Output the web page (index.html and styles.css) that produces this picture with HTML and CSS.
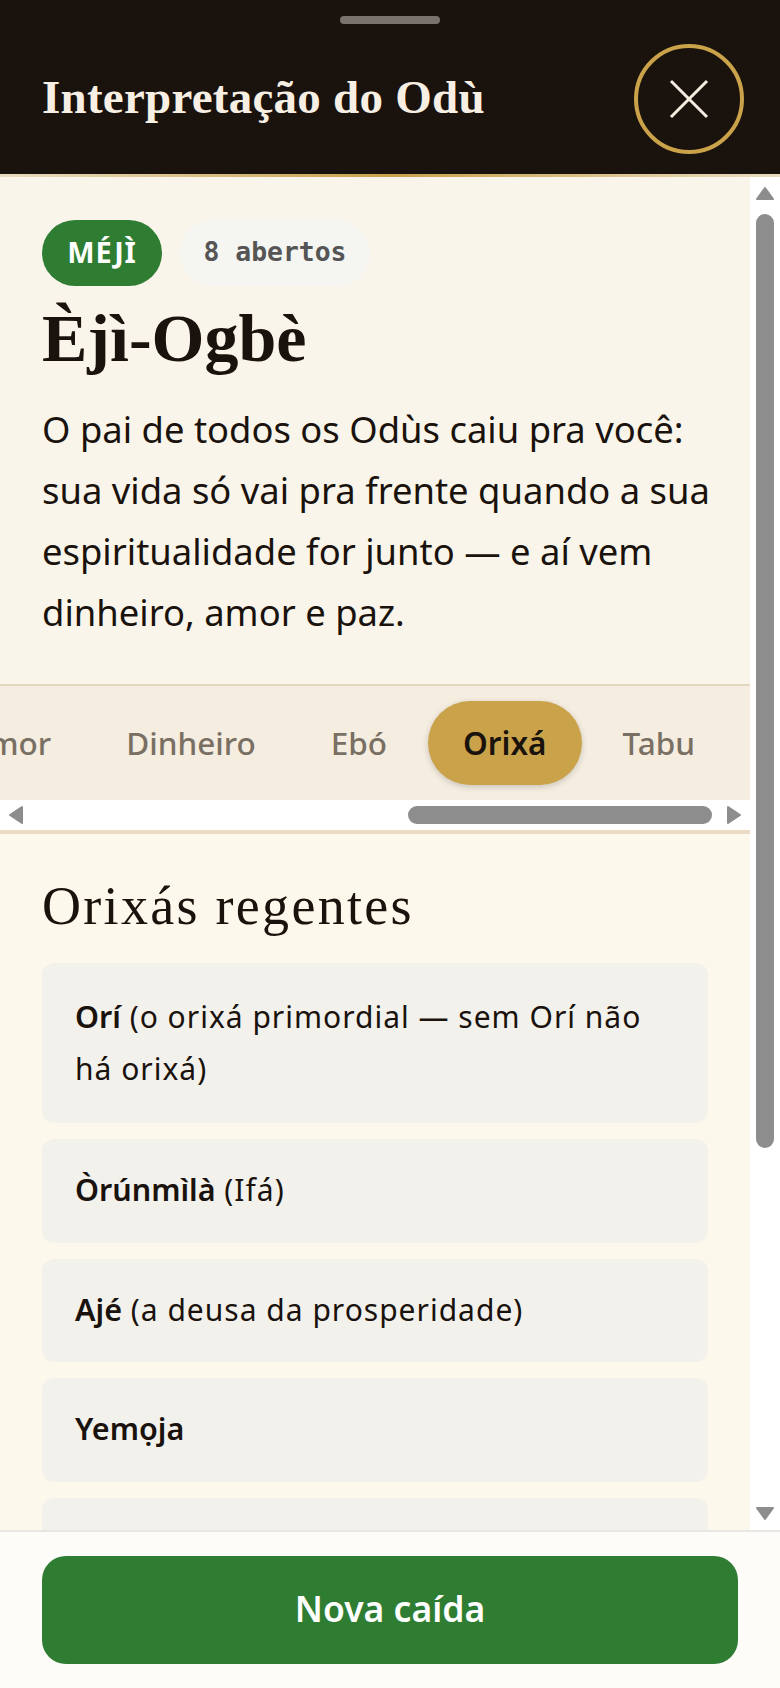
FILE: index.html
```html
<!DOCTYPE html>
<html lang="pt-BR">
<head>
    <meta charset="UTF-8">
    <meta name="viewport" content="width=device-width, initial-scale=1.0">
    <title>Interpretação do Odù</title>
    <link rel="stylesheet" href="styles.css">
</head>
<body>

    <header class="sheet-header">
        <div class="handle"></div>
        <div class="header-row">
            <div class="sheet-title">Interpretação do Odù</div>
            <button class="close-btn" type="button" aria-label="Fechar">
                <svg width="40" height="40" viewBox="0 0 40 40"><path d="M2 2 L38 38 M38 2 L2 38" stroke="#f5ede0" stroke-width="3" fill="none"/></svg>
            </button>
        </div>
    </header>
    <div class="gold-line"></div>

    <div class="scroll-area">
        <main class="scroll-content">
            <section class="hero">
                <div class="badges">
                    <span class="badge-green">MÉJÌ</span>
                    <span class="badge-mono">8 abertos</span>
                </div>
                <h1>Èjì-Ogbè</h1>
                <p>O pai de todos os Odùs caiu pra você: sua vida só vai pra frente quando a sua espiritualidade for junto — e aí vem dinheiro, amor e paz.</p>
            </section>

            <nav class="tabs">
                <span class="tab">Amor</span>
                <span class="tab">Dinheiro</span>
                <span class="tab">Ebó</span>
                <span class="tab active">Orixá</span>
                <span class="tab">Tabu</span>
            </nav>
            <div class="h-scrollbar">
                <svg class="arrow" width="16" height="20" viewBox="0 0 16 20"><path d="M14 2 V18 L2 10 Z" fill="#8d8d8d" stroke="#8d8d8d" stroke-width="2" stroke-linejoin="round"/></svg>
                <div class="h-track"><div class="h-thumb"></div></div>
                <svg class="arrow" width="16" height="20" viewBox="0 0 16 20"><path d="M2 2 V18 L14 10 Z" fill="#8d8d8d" stroke="#8d8d8d" stroke-width="2" stroke-linejoin="round"/></svg>
            </div>

            <section class="panel">
                <h2>Orixás regentes</h2>
                <ul class="orisha-list">
                    <li><strong>Orí</strong> (o orixá primordial — sem Orí não há orixá)</li>
                    <li><strong>Òrúnmìlà</strong> (Ifá)</li>
                    <li><strong>Ajé</strong> (a deusa da prosperidade)</li>
                    <li><strong>Yemọja</strong></li>
                    <li>&nbsp;</li>
                </ul>
            </section>
        </main>

        <div class="v-scrollbar">
            <svg width="20" height="16" viewBox="0 0 20 16"><path d="M10 3 L18 14 H2 Z" fill="#8d8d8d" stroke="#8d8d8d" stroke-width="2" stroke-linejoin="round"/></svg>
            <div class="v-track"><div class="v-thumb"></div></div>
            <svg width="20" height="16" viewBox="0 0 20 16"><path d="M2 2 H18 L10 13 Z" fill="#8d8d8d" stroke="#8d8d8d" stroke-width="2" stroke-linejoin="round"/></svg>
        </div>
    </div>

    <footer class="sheet-footer">
        <button class="primary-btn" type="button">Nova caída</button>
    </footer>

</body>
</html>
```

FILE: styles.css
```css
/* Page */
body {
    font-family: "Noto Sans", sans-serif;
    margin: 0;
    height: 1688px;
    display: flex;
    flex-direction: column;
    overflow: hidden;
    background: #fdfcf9;
    color: #1a120c;
}

/* Header */
.sheet-header {
    background: #1a120c;
    padding: 16px 36px 20px 42px;
    height: 174px;
    box-sizing: border-box;
}

.handle {
    width: 100px;
    height: 8px;
    margin: 0 auto 20px;
    border-radius: 4px;
    background: #7a726c;
    position: relative;
    left: -3px;
}

.header-row {
    display: flex;
    align-items: center;
    justify-content: space-between;
}

.sheet-title {
    font-family: "Liberation Serif", serif;
    font-weight: bold;
    font-size: 47px;
    color: #f7efe3;
    letter-spacing: 0.25px;
    padding-bottom: 4px;
}

.close-btn {
    width: 110px;
    height: 110px;
    border: 4px solid #c9a24a;
    border-radius: 50%;
    background: transparent;
    padding: 0;
    display: flex;
    align-items: center;
    justify-content: center;
}

.gold-line {
    height: 3px;
    background: linear-gradient(90deg, #e8dcc0, #c9a24a 50%, #e8dcc0);
}

/* Scroll area */
.scroll-area {
    flex: 1;
    min-height: 0;
    display: flex;
    overflow: hidden;
}

.scroll-content {
    width: 750px;
    flex-shrink: 0;
}

/* Hero */
.hero {
    background: #f9f5ea;
    padding: 43px 42px 0;
    height: 507px;
    box-sizing: border-box;
}

.badges {
    display: flex;
    gap: 18px;
}

.badge-green {
    width: 120px;
    height: 66px;
    box-sizing: border-box;
    padding-bottom: 3px;
    border-radius: 33px;
    background: #2e7d32;
    color: #fff;
    font-weight: bold;
    font-size: 29px;
    letter-spacing: 0.8px;
    display: flex;
    align-items: center;
    justify-content: center;
}

.badge-mono {
    width: 190px;
    height: 66px;
    box-sizing: border-box;
    padding-bottom: 3px;
    border-radius: 33px;
    background: #f5f5f2;
    color: #555;
    font-family: "DejaVu Sans Mono", monospace;
    font-weight: bold;
    font-size: 26.4px;
    display: flex;
    align-items: center;
    justify-content: center;
}

h1 {
    font-family: "Liberation Serif", serif;
    font-size: 68px;
    font-weight: bold;
    margin: 10px 0 0;
    line-height: 84px;
}

.hero p {
    font-size: 36.4px;
    line-height: 61px;
    margin: 19px -8px 0 0;
}

/* Tabs */
.tabs {
    border-top: 2px solid #e4d8bf;
    background: #f5ede0;
    padding: 15px 21px 15px 0;
    height: 84px;
    display: flex;
    justify-content: flex-end;
    gap: 7px;
    overflow: hidden;
}

.tab {
    flex-shrink: 0;
    padding: 0 34px 2px;
    border-radius: 42px;
    display: flex;
    align-items: center;
    font-size: 31.5px;
    font-weight: 500;
    color: #7a6f63;
}

.tab.active {
    padding: 0 35px 2px;
    background: #c9a24a;
    color: #1a120c;
    font-weight: 600;
    box-shadow: 0 2px 6px rgba(0, 0, 0, 0.18);
}

/* Fake scrollbars */
.h-scrollbar {
    height: 30px;
    background: #fff;
    border-bottom: 4px solid #ecdcc6;
    display: flex;
    align-items: center;
    padding: 0 8px;
    gap: 4px;
}

.h-track {
    flex: 1;
}

.h-thumb {
    width: 304px;
    height: 18px;
    margin-left: auto;
    margin-right: 10px;
    border-radius: 9px;
    background: #8d8d8d;
}

.v-scrollbar {
    flex: 1;
    background: #fff;
    display: flex;
    flex-direction: column;
    align-items: center;
    padding: 8px 0;
    box-sizing: border-box;
}

.v-track {
    flex: 1;
    padding-top: 13px;
}

.v-thumb {
    width: 18px;
    height: 934px;
    border-radius: 9px;
    background: #8d8d8d;
}

/* Panel */
.panel {
    background: #fcf8ec;
    padding: 42px 42px 40px;
}

h2 {
    font-family: "Liberation Serif", serif;
    font-size: 54px;
    font-weight: normal;
    letter-spacing: 2.3px;
    line-height: 60px;
    margin: 0 0 27px;
}

.orisha-list {
    list-style: none;
    margin: 0;
    padding: 0;
    display: flex;
    flex-direction: column;
    gap: 16px;
}

.orisha-list li {
    background: #f3f1ec;
    border-radius: 12px;
    padding: 25px 33px 26.5px;
    font-size: 30px;
    letter-spacing: 1px;
    line-height: 52px;
}

.orisha-list li:first-child {
    padding-top: 28px;
    padding-bottom: 28px;
}

.orisha-list strong {
    font-weight: 600;
    font-size: 30.5px;
    line-height: 1;
    letter-spacing: 0;
}

/* Footer */
.sheet-footer {
    border-top: 2px solid #e9e7e2;
    padding: 24px 42px;
    height: 158px;
    box-sizing: border-box;
    background: #fdfcf9;
}

.primary-btn {
    width: 100%;
    height: 108px;
    border: none;
    border-radius: 24px;
    padding-bottom: 6px;
    background: #2e7d32;
    color: #fff;
    font-family: inherit;
    font-size: 35.5px;
    font-weight: 600;
}
```
